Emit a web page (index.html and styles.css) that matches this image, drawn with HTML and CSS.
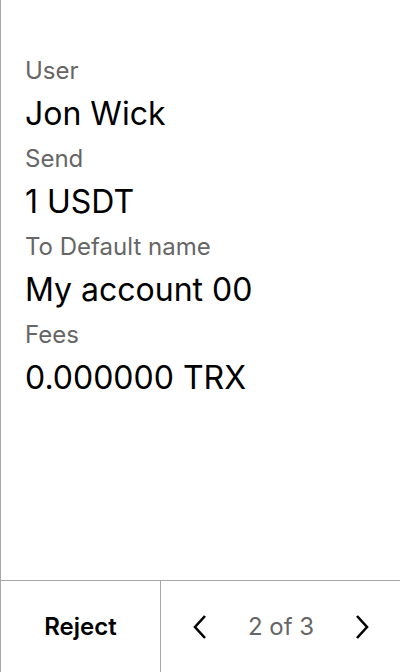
FILE: index.html
```html
<!DOCTYPE html>
<html>
<head>
<meta charset="utf-8">
<link rel="stylesheet" href="styles.css">
</head>
<body>
<div class="screen">
  <main class="content">
    <div class="field"><div class="label">User</div><div class="value">Jon Wick</div></div>
    <div class="field"><div class="label">Send</div><div class="value">1 USDT</div></div>
    <div class="field"><div class="label">To Default name</div><div class="value">My account 00</div></div>
    <div class="field"><div class="label">Fees</div><div class="value">0.000000 TRX</div></div>
  </main>
  <footer class="footer">
    <div class="reject">Reject</div>
    <div class="pager">
      <svg class="chev" width="16" height="26" viewBox="0 0 16 26"><path d="M13 2 L3 13 L13 24" fill="none" stroke="#000" stroke-width="2.6"/></svg>
      <span class="count">2 of 3</span>
      <svg class="chev" width="16" height="26" viewBox="0 0 16 26"><path d="M3 2 L13 13 L3 24" fill="none" stroke="#000" stroke-width="2.6"/></svg>
    </div>
  </footer>
</div>
</body>
</html>
```
FILE: styles.css
```css
html, body { margin: 0; padding: 0; background: #fff; }
body { font-family: Inter, "Noto Sans", sans-serif; color: #000; }
.screen {
  width: 400px; height: 672px; box-sizing: border-box;
  border-left: 1px solid #a8a8a8;
  display: flex; flex-direction: column;
}
.content { flex: 1; padding: 53px 24px 0 24px; }
.field { margin-bottom: 2px; }
.label { font-size: 24px; line-height: 36px; color: #666; }
.value { font-size: 32px; line-height: 50px; }
.footer {
  height: 91px; border-top: 1px solid #a8a8a8;
  display: flex;
}
.reject {
  width: 159px; border-right: 1px solid #a8a8a8;
  display: flex; align-items: center; justify-content: center;
  font-size: 24px; font-weight: 600;
}
.pager {
  flex: 1; display: flex; align-items: center; justify-content: space-between;
  padding: 0 30px 0 31px;
}
.count { font-size: 24px; color: #666; }
.chev { display: block; }
```
